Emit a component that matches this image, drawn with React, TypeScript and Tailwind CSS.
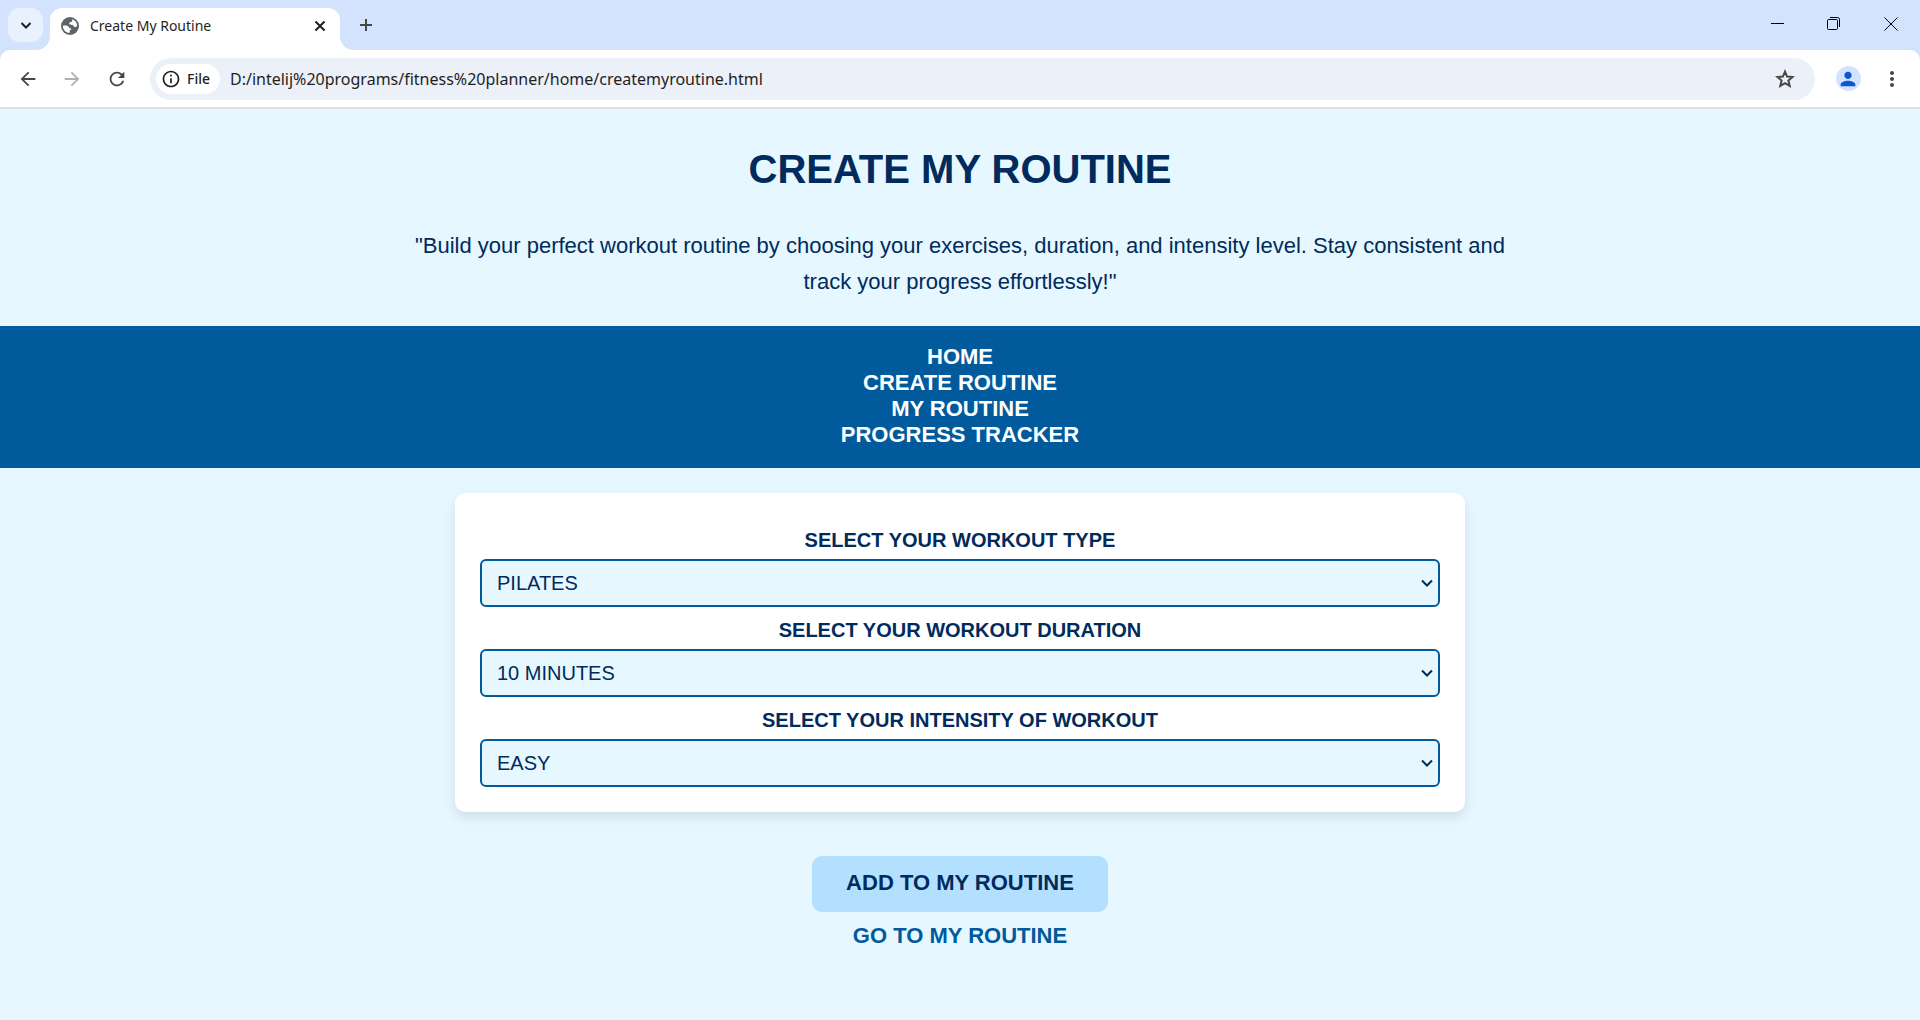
import { useState } from "react";
import type { ReactNode } from "react";
import { MdArrowBack, MdArrowForward, MdInfoOutline, MdMoreVert, MdPerson, MdRefresh } from "react-icons/md";

function IconButton({ label, children }: { label: string; children: ReactNode }) {
  return (
    <button type="button" aria-label={label} className="flex h-9 w-9 items-center justify-center rounded-full text-[#474747]">
      {children}
    </button>
  );
}

function LineIcon({ d }: { d: string }) {
  return (
    <svg viewBox="0 0 20 20" className="h-5 w-5" fill="none" stroke="currentColor" strokeWidth="2" aria-hidden="true">
      <path d={d} />
    </svg>
  );
}

function GlobeIcon() {
  return (
    <svg viewBox="0 0 18 18" className="h-[18px] w-[18px] shrink-0" aria-hidden="true">
      <circle cx="9" cy="9" r="9" fill="#5f6368" />
      <path
        d="M1.800 8.800c2-.3 4.400-.3 5.600.6.800.7.500 1.500 1.400 1.800.9.200 1.500.1 1.500.9s-1.500.9-1.600 1.900c-.1.800.1 1.400-.2 2.100C4.700 15.800 1.900 12.700 1.800 8.800zM11.400 2.200c2.700 1 4.700 3.500 4.800 6.500-.6 1-1.700 1.500-2.700 1.200-1.100-.3-.8-1.400-1.700-1.800-1-.4-2.600.1-3.300-.8-.7-1 .1-1.900 1-2.200.9-.3 1.800-.2 1.800-1.100 0-.8-.4-1.100.1-1.800z"
        fill="#fff"
      />
    </svg>
  );
}

function TabFlare({ side }: { side: "left" | "right" }) {
  return (
    <svg
      viewBox="0 0 14 14"
      aria-hidden="true"
      className={side === "left" ? "absolute bottom-0 right-full h-3.5 w-3.5" : "absolute bottom-0 left-full h-3.5 w-3.5"}
    >
      <path d={side === "left" ? "M14 0v14H0C8 14 14 8 14 0z" : "M0 0v14h14C6 14 0 8 0 0z"} fill="#fff" />
    </svg>
  );
}

function BrowserChrome() {
  return (
    <header className="bg-[#d3e3fd] font-['Noto_Sans',sans-serif] text-[#1f1f1f]">
      <div className="flex h-[50px] items-end">
        <button
          type="button"
          aria-label="Search tabs"
          className="mb-2 ml-2 flex h-[34px] w-[35px] items-center justify-center rounded-xl bg-[#e9f1fe]"
        >
          <LineIcon d="M5.500 8l4.500 4.500L14.500 8" />
        </button>
        <div className="relative ml-[7px] flex h-[42px] w-[290px] items-center rounded-t-xl bg-white pb-1.5 pl-[11px] pr-2.5">
          <TabFlare side="left" />
          <TabFlare side="right" />
          <GlobeIcon />
          <span className="ml-[11px] flex-1 whitespace-nowrap text-sm">Create My Routine</span>
          <button type="button" aria-label="Close tab" className="flex h-5 w-5 items-center justify-center">
            <LineIcon d="M5.500 5.500l9 9M14.500 5.500l-9 9" />
          </button>
        </div>
        <button type="button" aria-label="New tab" className="mb-[15px] ml-4 flex h-5 w-5 items-center justify-center text-[#474747]">
          <LineIcon d="M10 4v12M4 10h12" />
        </button>
        <div className="mb-[2px] ml-auto flex h-12">
          <button type="button" aria-label="Minimize" className="flex h-12 w-14 items-center justify-center text-black">
            <svg viewBox="0 0 14 14" className="h-3.5 w-3.5">
              <path d="M0 6.500h13" stroke="currentColor" />
            </svg>
          </button>
          <button type="button" aria-label="Restore" className="flex h-12 w-14 items-center justify-center text-black">
            <svg viewBox="0 0 14 14" className="h-3.5 w-3.5" fill="none" stroke="currentColor">
              <rect x=".5" y="2.500" width="10" height="10" rx="1" />
              <path d="M3 .5h7.500a2 2 0 0 1 2 2V10" />
            </svg>
          </button>
          <button type="button" aria-label="Close" className="flex h-12 w-[58px] items-center justify-center text-black">
            <svg viewBox="0 0 14 14" className="h-3.5 w-3.5">
              <path d="M.5.5l13 13M13.500.5l-13 13" stroke="currentColor" />
            </svg>
          </button>
        </div>
      </div>
      <div className="flex h-[59px] items-center rounded-t-[10px] border-b-2 border-[#dfe1e0] bg-white px-2.5">
        <IconButton label="Back">
          <MdArrowBack className="h-[22px] w-[22px]" />
        </IconButton>
        <div className="ml-2 text-[#b0b0b0]">
          <button type="button" aria-label="Forward" disabled className="flex h-9 w-9 items-center justify-center">
            <MdArrowForward className="h-[22px] w-[22px]" />
          </button>
        </div>
        <div className="ml-[9px]">
          <IconButton label="Reload">
            <MdRefresh className="h-[22px] w-[22px]" />
          </IconButton>
        </div>
        <div className="ml-[15px] flex h-[42px] flex-1 items-center rounded-full bg-[#ebf0f9] pl-1.5 pr-3">
          <button type="button" className="flex h-[30px] w-16 items-center gap-1.5 rounded-full bg-white pl-[5px] text-sm font-medium">
            <MdInfoOutline className="h-5 w-5" />
            File
          </button>
          <input
            type="text"
            aria-label="Address"
            defaultValue="D:/intelij%20programs/fitness%20planner/home/createmyroutine.html"
            className="ml-2.5 min-w-0 flex-1 bg-transparent text-base outline-none"
          />
          <IconButton label="Bookmark this page">
            <LineIcon d="M10 2.600l2.100 5 5.400.5-4.100 3.500 1.300 5.300L10 14.100l-4.700 2.800 1.300-5.300-4.100-3.500 5.400-.5z" />
          </IconButton>
        </div>
        <div className="ml-[15px] flex items-center">
          <IconButton label="Profile">
            <span className="flex h-[25px] w-[25px] items-center justify-center rounded-full bg-[#d3e3fd] text-[#0b57d0]">
              <MdPerson className="h-[22px] w-[22px]" />
            </span>
          </IconButton>
          <div className="ml-2">
            <IconButton label="Menu">
              <MdMoreVert className="h-6 w-6" />
            </IconButton>
          </div>
        </div>
      </div>
    </header>
  );
}

const navLinks = ["HOME", "CREATE ROUTINE", "MY ROUTINE", "PROGRESS TRACKER"];

const fields = [
  { id: "workout-type", label: "SELECT YOUR WORKOUT TYPE", options: ["PILATES", "YOGA", "CARDIO", "STRENGTH"] },
  { id: "workout-duration", label: "SELECT YOUR WORKOUT DURATION", options: ["10 MINUTES", "20 MINUTES", "30 MINUTES"] },
  { id: "workout-intensity", label: "SELECT YOUR INTENSITY OF WORKOUT", options: ["EASY", "MEDIUM", "HARD"] },
];

function SelectField({ id, label, options }: { id: string; label: string; options: string[] }) {
  const [value, setValue] = useState(options[0]);
  return (
    <div className="flex flex-col gap-2">
      <label htmlFor={id} className="text-center text-[20px] leading-[22px] font-bold">
        {label}
      </label>
      <div className="relative">
        <select
          id={id}
          value={value}
          onChange={(event) => setValue(event.target.value)}
          className="block h-12 w-full appearance-none rounded-md border-2 border-[#005a9c] bg-[#e6f7ff] pl-[15px] pr-8 text-[20px] leading-6"
        >
          {options.map((option) => (
            <option key={option}>{option}</option>
          ))}
        </select>
        <svg
          viewBox="0 0 12 8"
          aria-hidden="true"
          className="pointer-events-none absolute top-1/2 right-[7px] h-2 w-3 -translate-y-1/2"
        >
          <path d="M1 1.500l5 5 5-5" fill="none" stroke="#002b5c" strokeWidth="2" />
        </svg>
      </div>
    </div>
  );
}

export default function App() {
  return (
    <div className="flex min-h-screen flex-col bg-[#e6f7ff] font-['Liberation_Sans',Arial,sans-serif] text-[#002b5c]">
      <BrowserChrome />
      <main className="flex flex-col pb-10">
        <h1 className="mt-[37px] text-center text-[40px] leading-[46px] font-bold">CREATE MY ROUTINE</h1>
        <p className="mx-auto mt-9 max-w-[1125px] text-center text-[22px] leading-9">
          "Build your perfect workout routine by choosing your exercises, duration, and intensity level. Stay consistent and
          track your progress effortlessly!"
        </p>
        <nav className="mt-[26px] bg-[#005a9c] pt-[18px] pb-5">
          <ul className="flex flex-col items-center text-[22px] leading-[26px] font-bold text-white">
            {navLinks.map((link) => (
              <li key={link}>
                <a href="#">{link}</a>
              </li>
            ))}
          </ul>
        </nav>
        <form className="flex flex-col items-center" onSubmit={(event) => event.preventDefault()}>
          <div className="mt-[25px] flex w-full max-w-[1010px] flex-col gap-3 rounded-[10px] bg-white px-[25px] pt-9 pb-[25px] shadow-[0_5px_12px_rgba(0,0,0,0.1)]">
            {fields.map((field) => (
              <SelectField key={field.id} {...field} />
            ))}
          </div>
          <button
            type="submit"
            className="mt-11 h-14 rounded-[10px] bg-[#b3e0ff] px-[34px] pb-0.5 text-[22px] leading-[26px] font-bold"
          >
            ADD TO MY ROUTINE
          </button>
          <a href="#" className="mt-[11px] text-[22px] leading-[26px] font-bold text-[#005a9c]">
            GO TO MY ROUTINE
          </a>
        </form>
      </main>
    </div>
  );
}
